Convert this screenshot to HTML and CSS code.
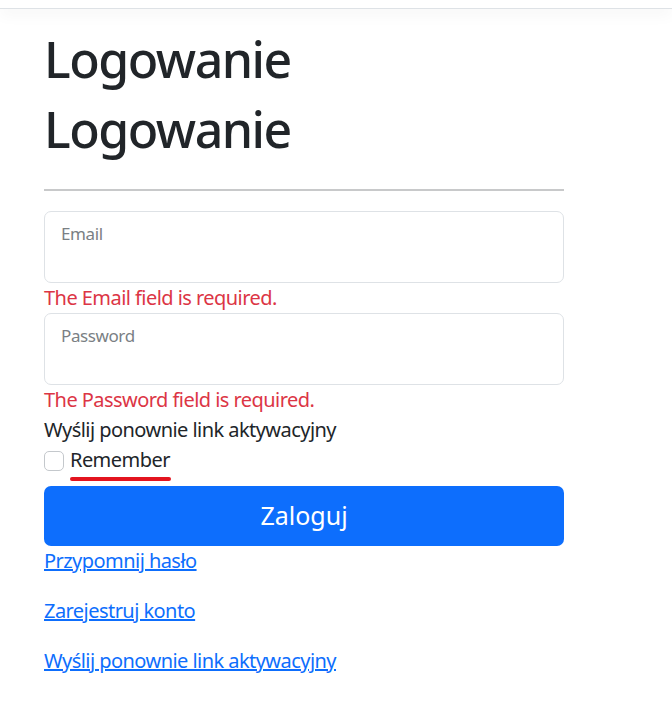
FILE: index.html
```html
<!DOCTYPE html>
<html lang="pl">
<head>
  <meta charset="UTF-8">
  <meta name="viewport" content="width=device-width, initial-scale=1.0">
  <title>Logowanie</title>
  <link rel="stylesheet" href="styles.css">
</head>
<body>
  <header class="topbar"></header>

  <main class="page">
    <h1>Logowanie</h1>
    <h1>Logowanie</h1>
    <hr>

    <form class="login">
      <div class="field">
        <input type="email" id="email">
        <label for="email">Email</label>
      </div>
      <div class="error">The Email field is required.</div>

      <div class="field">
        <input type="password" id="password">
        <label for="password">Password</label>
      </div>
      <div class="error">The Password field is required.</div>

      <div class="resend">Wyślij ponownie link aktywacyjny</div>

      <div class="check">
        <input type="checkbox" id="remember">
        <label for="remember" class="marked">Remember</label>
      </div>

      <button type="submit">Zaloguj</button>
    </form>

    <p><a href="#">Przypomnij hasło</a></p>
    <p><a href="#">Zarejestruj konto</a></p>
    <p><a href="#">Wyślij ponownie link aktywacyjny</a></p>
  </main>
</body>
</html>
```

FILE: styles.css
```css
* {
  margin: 0;
  padding: 0;
  box-sizing: border-box;
}

body {
  font-family: 'Segoe UI', 'Noto Sans', sans-serif;
  font-size: 20px;
  line-height: 1.5;
  letter-spacing: -0.55px;
  color: #212529;
  background-color: #fff;
}

.topbar {
  height: 9px;
  border-bottom: 1px solid #dee2e6;
  box-shadow: 0 5px 15px rgba(0, 0, 0, 0.05);
  margin-bottom: 20px;
}

.page {
  width: 520px;
  margin-left: 44px;
}

h1 {
  font-size: 50px;
  font-weight: 500;
  line-height: 1.2;
  letter-spacing: -1.5px;
  margin-bottom: 10px;
}

hr {
  border: none;
  border-top: 2px solid #c8c9ca;
  margin: 30px 0 20px;
}

.login {
  display: flex;
  flex-direction: column;
}

.field {
  position: relative;
}

.field input {
  display: block;
  width: 100%;
  height: 72px;
  border: 1px solid #dee2e6;
  border-radius: 7px;
  background-color: #fff;
  padding: 32px 15px 8px;
  font: inherit;
  color: #212529;
}

.field label {
  position: absolute;
  top: 10px;
  left: 17px;
  font-size: 17px;
  letter-spacing: -0.4px;
  color: #7a7f84;
}

.error {
  color: #dc3545;
}

.check {
  display: flex;
  align-items: center;
  gap: 6px;
  height: 30px;
  margin-bottom: 11px;
}

.check input {
  appearance: none;
  width: 20px;
  height: 20px;
  border: 1px solid #c4c8cc;
  border-radius: 5px;
  background-color: #fff;
  margin-top: 2px;
}

.marked {
  position: relative;
}

.marked::after {
  content: '';
  position: absolute;
  left: 0;
  right: -1px;
  bottom: -6px;
  height: 4px;
  border-radius: 2px;
  background-color: #e3141f;
}

button {
  height: 60px;
  border: none;
  border-radius: 7px;
  background-color: #0d6efd;
  color: #fff;
  font: inherit;
  font-size: 25px;
  cursor: pointer;
}

p {
  margin-bottom: 20px;
}

a {
  color: #0d6efd;
}
```
